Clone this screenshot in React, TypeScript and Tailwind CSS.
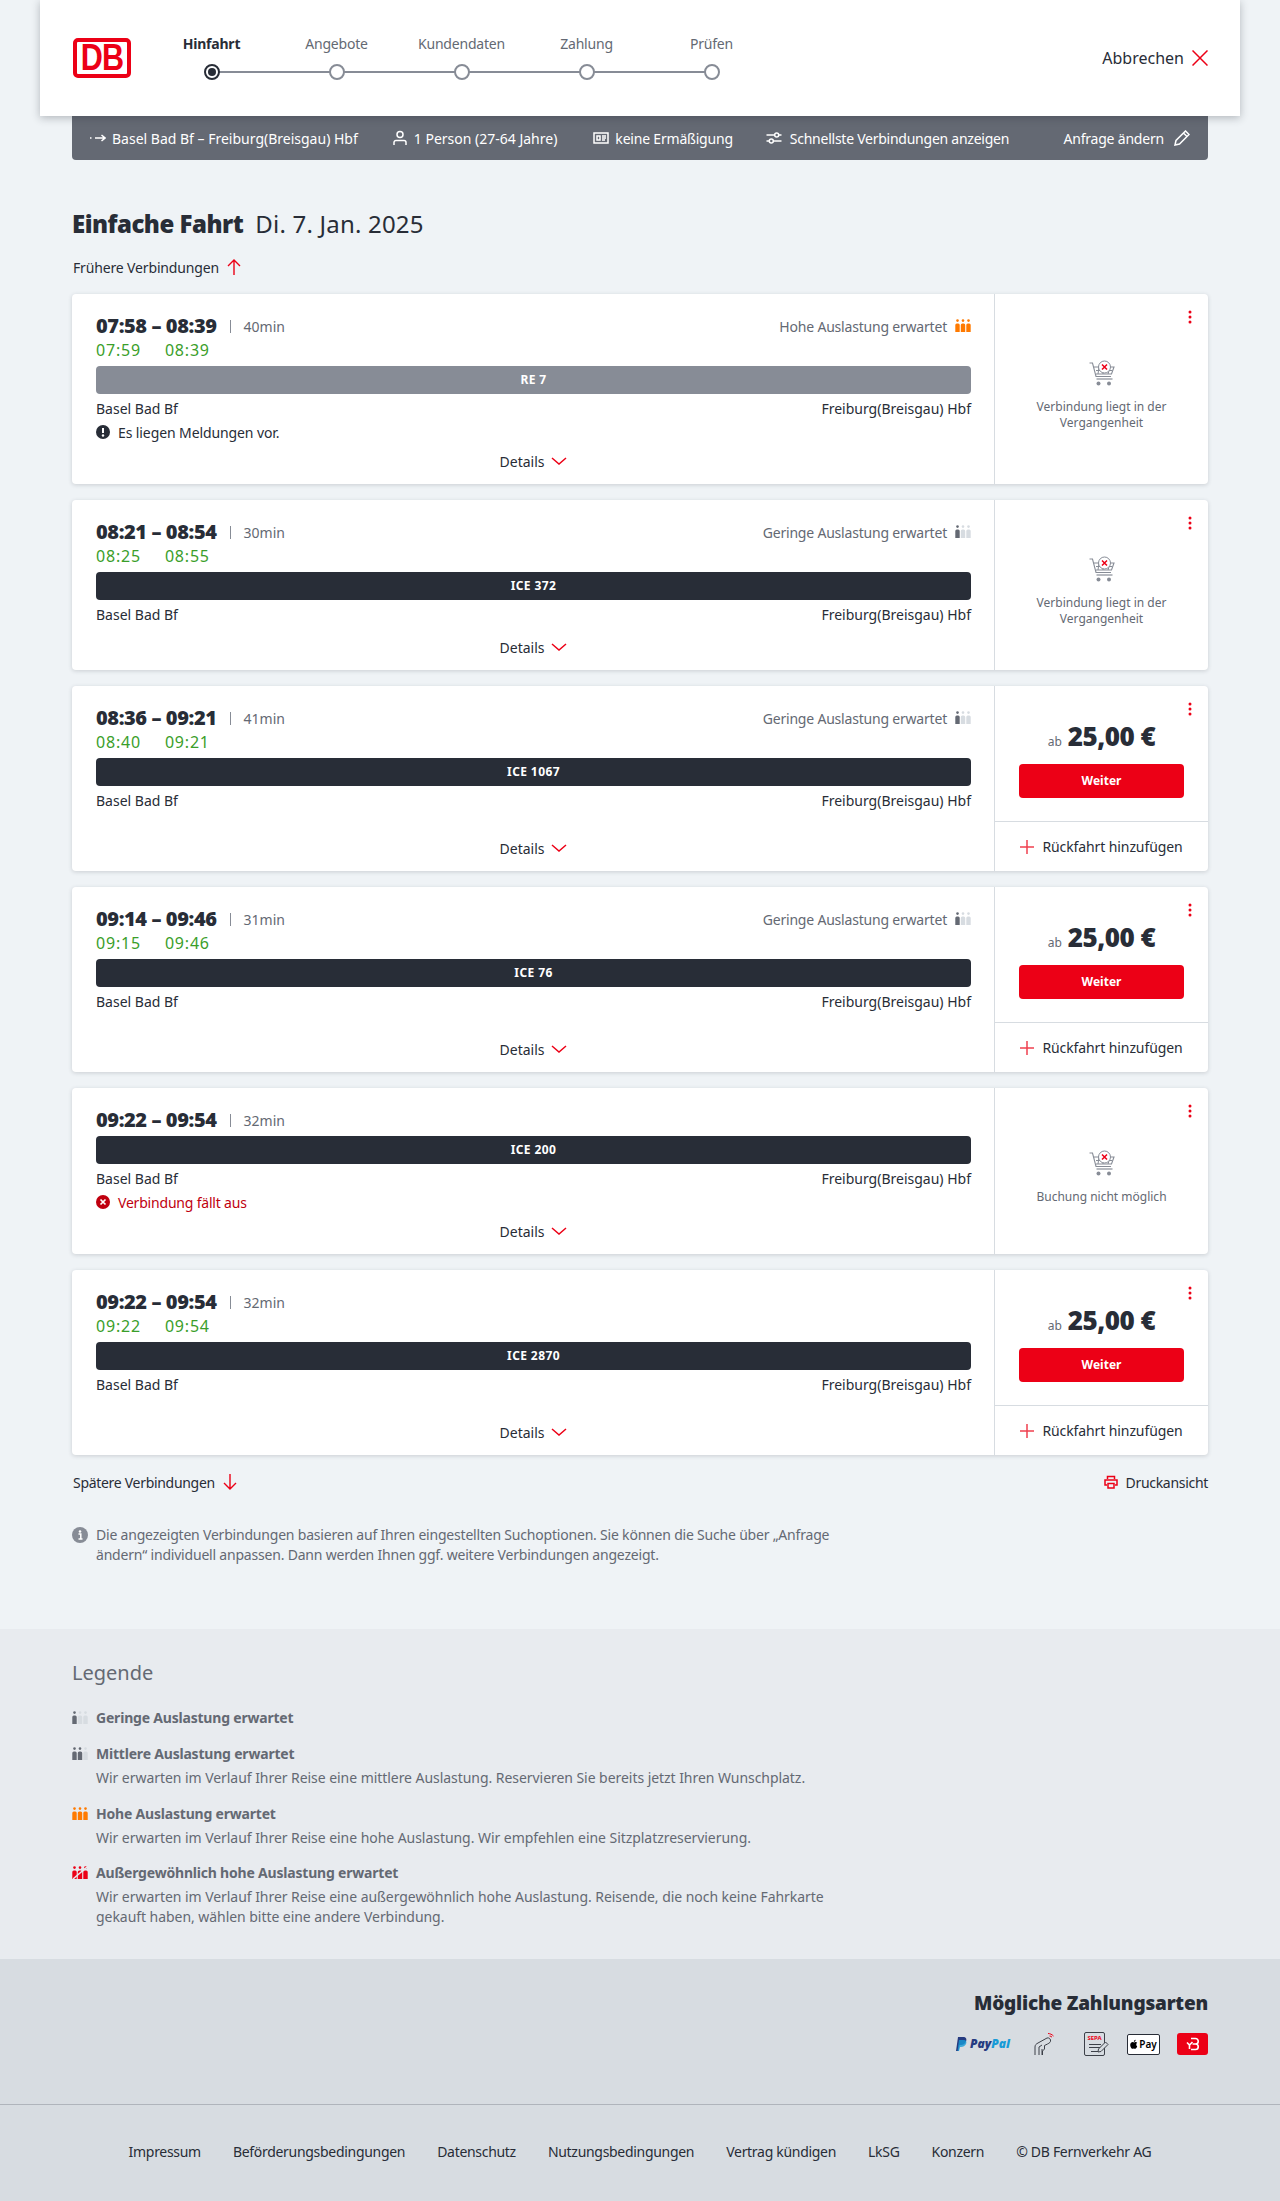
import React from "react";

const RED = "#EC0016";

function Load({ level, className = "" }: { level: 1 | 2 | 3 | 4; className?: string }) {
  const on = level === 3 ? "#FF7A00" : level === 4 ? "#EC0016" : "#646973";
  const off = "#D7DCE1";
  const c = (i: number) => (i < level ? on : off);
  return (
    <svg width="16" height="14" viewBox="0 0 16 14" className={className}>
      {[0, 1, 2].map((i) => (
        <g key={i} fill={c(i)}>
          <circle cx={2.5 + i * 5.5} cy="1.6" r="1.3" />
          <path d={`M${0.3 + i * 5.5} 6a1.5 1.5 0 0 1 1.5-1.5h1.4a1.5 1.5 0 0 1 1.5 1.5v7h-4.4z`} />
        </g>
      ))}
      {level === 4 && <path d="M1 13L15 1" stroke="#E8EBEF" strokeWidth="1.6" />}
    </svg>
  );
}

function Kebab() {
  return (
    <svg width="4" height="14" viewBox="0 0 4 14" className="absolute top-4 right-[16px]">
      <circle cx="2" cy="2" r="1.5" fill={RED} />
      <circle cx="2" cy="7" r="1.5" fill={RED} />
      <circle cx="2" cy="12" r="1.5" fill={RED} />
    </svg>
  );
}

function Cart() {
  return (
    <svg width="26" height="26" viewBox="0 0 26 26" fill="none">
      <path d="M0.5 3h3l3.5 13.5h15M5 7h5M14 7h11l-2.5 7H7" stroke="#878C96" strokeWidth="1.1" />
      <path d="M7 10.5h16M9 14l1-7M14 14v-3M19 14l1-3" stroke="#878C96" strokeWidth="1" />
      <path d="M7.5 19h16" stroke="#878C96" strokeWidth="1.2" />
      <circle cx="9.5" cy="23.5" r="2" fill="#878C96" />
      <circle cx="20" cy="23.5" r="2" fill="#878C96" />
      <circle cx="15.5" cy="7" r="6" fill="#fff" stroke="#878C96" strokeWidth="1" />
      <path d="M13 4.5l5 5M18 4.5l-5 5" stroke={RED} strokeWidth="1.5" />
    </svg>
  );
}

function Chevron() {
  return (
    <svg width="16" height="8" viewBox="0 0 16 8" fill="none" className="ml-[7px]">
      <path d="M1 1l7 6 7-6" stroke={RED} strokeWidth="1.5" />
    </svg>
  );
}

function Plus() {
  return (
    <svg width="14" height="14" viewBox="0 0 14 14" className="mr-2 shrink-0">
      <path d="M7 0v14M0 7h14" stroke="#F0404F" strokeWidth="1.5" />
    </svg>
  );
}

type C = {
  time: string;
  dur: string;
  rt?: [string, string];
  load?: [string, 1 | 3];
  train: string;
  grey?: boolean;
  msg?: "info" | "fail";
  side: "past" | "none" | "price";
};

const cards: C[] = [
  { time: "07:58 – 08:39", dur: "40min", rt: ["07:59", "08:39"], load: ["Hohe Auslastung erwartet", 3], train: "RE 7", grey: true, msg: "info", side: "past" },
  { time: "08:21 – 08:54", dur: "30min", rt: ["08:25", "08:55"], load: ["Geringe Auslastung erwartet", 1], train: "ICE 372", side: "past" },
  { time: "08:36 – 09:21", dur: "41min", rt: ["08:40", "09:21"], load: ["Geringe Auslastung erwartet", 1], train: "ICE 1067", side: "price" },
  { time: "09:14 – 09:46", dur: "31min", rt: ["09:15", "09:46"], load: ["Geringe Auslastung erwartet", 1], train: "ICE 76", side: "price" },
  { time: "09:22 – 09:54", dur: "32min", train: "ICE 200", msg: "fail", side: "none" },
  { time: "09:22 – 09:54", dur: "32min", rt: ["09:22", "09:54"], train: "ICE 2870", side: "price" },
];

function Card({ c }: { c: C }) {
  return (
    <div className="relative flex rounded-[4px] bg-white shadow-[0_1px_4px_rgba(40,45,55,0.18)]">
      <div className="flex min-w-0 flex-1 flex-col border-r border-[#D7DCE1] pr-[23px] pl-6 pt-5">
        <div className="flex h-6 items-center justify-between">
          <div className="flex items-center">
            <span className="text-[20px] font-black tracking-[-0.4px] text-[#282D37]">{c.time}</span>
            <span className="ml-[13px] h-[13px] w-px bg-[#878C96]" />
            <span className="ml-[13px] text-[14px] text-[#646973]">{c.dur}</span>
          </div>
          {c.load && (
            <div className="flex items-center text-[14px] tracking-[-0.2px] text-[#646973]">
              {c.load[0]}
              <Load level={c.load[1]} className="ml-2" />
            </div>
          )}
        </div>
        {c.rt && (
          <div className="flex h-6 items-center gap-[24px] text-[16px] tracking-[0.8px] text-[#3A9E2A]">
            <span>{c.rt[0]}</span>
            <span>{c.rt[1]}</span>
          </div>
        )}
        <div className={`mt-1 flex h-7 items-center justify-center rounded-[4px] text-[12px] font-bold tracking-[0.4px] text-white ${c.grey ? "bg-[#878C96]" : "bg-[#282D37]"}`}>
          {c.train}
        </div>
        <div className="mt-1 flex h-5 items-center justify-between text-[14px] text-[#282D37]">
          <span>Basel Bad Bf</span>
          <span>Freiburg(Breisgau) Hbf</span>
        </div>
        {c.msg === "info" && (
          <div className="mt-1 -mb-1 flex h-5 items-center text-[14px] tracking-[-0.1px] text-[#282D37]">
            <svg width="14" height="14" viewBox="0 0 14 14" className="mr-2">
              <circle cx="7" cy="7" r="7" fill="#282D37" />
              <path d="M7 3v5" stroke="#fff" strokeWidth="2" />
              <circle cx="7" cy="10.5" r="1.2" fill="#fff" />
            </svg>
            Es liegen Meldungen vor.
          </div>
        )}
        {c.msg === "fail" && (
          <div className="mt-1 -mb-1 flex h-5 items-center text-[14px] tracking-[-0.2px] text-[#C0000F]">
            <svg width="14" height="14" viewBox="0 0 14 14" className="mr-2">
              <circle cx="7" cy="7" r="7" fill="#C0000F" />
              <path d="M4.5 4.5l5 5M9.5 4.5l-5 5" stroke="#fff" strokeWidth="1.7" />
            </svg>
            Verbindung fällt aus
          </div>
        )}
        <div className="mt-auto flex h-[46px] items-start justify-center pt-[13px]">
          <div className="flex h-5 items-center text-[14px] text-[#282D37]">
            Details
            <Chevron />
          </div>
        </div>
      </div>
      <div className="relative flex w-[213px] shrink-0 flex-col">
        <Kebab />
        {c.side === "price" ? (
          <>
            <div className="flex h-[136px] flex-col items-center border-b border-[#D7DCE1] pt-8">
              <div className="flex h-9 items-baseline">
                <span className="mr-[6px] text-[12px] text-[#646973]">ab</span>
                <span className="text-[26px] leading-9 font-black tracking-[-0.5px] text-[#282D37]">25,00 €</span>
              </div>
              <div className="mt-[10px] flex h-[34px] w-[165px] items-center justify-center rounded-[4px] bg-[#EC0016] text-[12px] font-bold text-white">
                Weiter
              </div>
            </div>
            <div className="flex h-[49px] items-center justify-center text-[14px] tracking-[-0.1px] text-[#282D37]">
              <Plus />
              Rückfahrt hinzufügen
            </div>
          </>
        ) : (
          <div className="flex flex-1 flex-col items-center justify-center px-6 pt-[12px] text-center">
            <Cart />
            <div className="mt-[13px] text-[12px] leading-4 text-[#646973]">
              {c.side === "past" ? (
                <>
                  Verbindung liegt in der
                  <br />
                  Vergangenheit
                </>
              ) : (
                "Buchung nicht möglich"
              )}
            </div>
          </div>
        )}
      </div>
    </div>
  );
}

function ArrowV({ up }: { up?: boolean }) {
  return (
    <svg width="14" height="16" viewBox="0 0 14 16" fill="none" className="ml-2" style={up ? undefined : { transform: "rotate(180deg)" }}>
      <path d="M7 16V1M1 7l6-6 6 6" stroke={RED} strokeWidth="1.4" />
    </svg>
  );
}

const steps = ["Hinfahrt", "Angebote", "Kundendaten", "Zahlung", "Prüfen"];

function Stepper() {
  return (
    <div className="-mt-[3px] ml-[18px] flex">
      {steps.map((s, i) => (
        <div key={s} className="relative flex w-[125px] flex-col items-center">
          <div className={`flex h-5 items-center text-[14px] tracking-[-0.2px] ${i === 0 ? "font-bold text-[#282D37]" : "text-[#646973]"}`}>{s}</div>
          {i < 4 && <span className="absolute top-[38px] left-1/2 h-0.5 w-full bg-[#878C96]" />}
          <div className={`relative mt-[11px] flex h-4 w-4 items-center justify-center rounded-full border-2 bg-white ${i === 0 ? "border-[#282D37]" : "border-[#878C96]"}`}>
            {i === 0 && <span className="h-2 w-2 rounded-full bg-[#282D37]" />}
          </div>
        </div>
      ))}
    </div>
  );
}

function BarIcon({ d, extra }: { d: string; extra?: React.ReactNode }) {
  return (
    <svg width="16" height="16" viewBox="0 0 16 16" fill="none" stroke="#fff" strokeWidth="1.5" className="mr-[6px] shrink-0">
      <path d={d} />
      {extra}
    </svg>
  );
}

function Legend({ level, title, text }: { level: 1 | 2 | 3 | 4; title: string; text?: React.ReactNode }) {
  return (
    <div className="flex">
      <div className="flex h-5 w-6 shrink-0 items-center">
        <Load level={level} />
      </div>
      <div className="w-[760px] text-[14px] leading-5 tracking-[-0.05px] text-[#646973]">
        <div className="h-5 font-bold tracking-[-0.2px]">{title}</div>
        {text && <div className="mt-1">{text}</div>}
      </div>
    </div>
  );
}

export default function App() {
  return (
    <div className="min-h-[2201px] bg-[#EFF3F6] font-['Noto_Sans',sans-serif] text-[#282D37]">
      <header className="relative z-10 mx-10 flex h-[116px] items-center bg-white px-8 shadow-[0_2px_8px_rgba(40,45,55,0.3)]">
        <div className="ml-px flex h-10 w-[58px] items-center justify-center overflow-hidden rounded-[5px] border-[4px] border-[#EC0016] bg-white font-['Liberation_Sans',sans-serif] text-[36px] leading-none font-bold tracking-[-1px] text-[#EC0016]">
          <span className="scale-x-[0.85]">DB</span>
        </div>
        <Stepper />
        <div className="ml-auto flex items-center text-[16px] text-[#282D37]">
          Abbrechen
          <svg width="16" height="16" viewBox="0 0 16 16" fill="none" className="ml-2">
            <path d="M0.5 0.5l15 15M15.5 0.5l-15 15" stroke={RED} strokeWidth="1.5" />
          </svg>
        </div>
      </header>

      <main className="mx-[72px]">
        <div className="flex h-11 items-center rounded-b-[4px] bg-[#646973] pr-[18px] pl-[18px] text-[14px] text-white">
          <BarIcon d="M5 8h10M11.500 5l3.500 3-3.500 3M0 8h1.500" />
          <span>Basel Bad Bf – Freiburg(Breisgau) Hbf</span>
          <span className="ml-[34px] flex items-center">
            <BarIcon d="M2 15v-2.500a2 2 0 0 1 2-2h8a2 2 0 0 1 2 2V15" extra={<circle cx="8" cy="4.500" r="3" />} />
            1 Person (27-64 Jahre)
          </span>
          <span className="ml-[36px] flex items-center tracking-[-0.2px]">
            <BarIcon d="M1 3h14v10H1zM4 6h3v4H4zM9 6h4M9 8h4M9 10h3" />
            keine Ermäßigung
          </span>
          <span className="ml-[33px] flex items-center tracking-[-0.25px]">
            <svg width="16" height="16" viewBox="0 0 16 16" fill="none" stroke="#fff" strokeWidth="1.500" className="mr-2 shrink-0">
              <path d="M0.500 5h8M13 5h2.500M0.500 11h2.500M8 11h7.500" />
              <circle cx="10.700" cy="5" r="2" />
              <circle cx="5.300" cy="11" r="2" />
            </svg>
            Schnellste Verbindungen anzeigen
          </span>
          <span className="ml-auto flex items-center tracking-[-0.2px]">
            Anfrage ändern
            <svg width="16" height="16" viewBox="0 0 16 16" fill="none" stroke="#fff" strokeWidth="1.500" className="ml-[10px]">
              <path d="M1 15l1-4.500L11.500 1l3.500 3.500L5.500 14zM9.500 3l3.500 3.500" />
            </svg>
          </span>
        </div>

        <h1 className="mt-[48px] flex h-8 items-center text-[24px] font-normal">
          <span className="font-black tracking-[-0.5px]">Einfache Fahrt</span>
          <span className="ml-3 tracking-[0.2px]">Di. 7. Jan. 2025</span>
        </h1>

        <div className="mt-[17px] flex h-5 items-center pl-px text-[14px] tracking-[-0.15px]">
          Frühere Verbindungen
          <ArrowV up />
        </div>

        <div className="mt-[17px] flex flex-col gap-4">
          {cards.map((c, i) => (
            <Card key={i} c={c} />
          ))}
        </div>

        <div className="mt-[17px] flex h-5 items-center justify-between pl-px text-[14px] tracking-[-0.3px]">
          <span className="flex items-center">
            Spätere Verbindungen
            <ArrowV />
          </span>
          <span className="flex items-center">
            <svg width="14" height="14" viewBox="0 0 14 14" className="mr-2" fill="none" stroke={RED} strokeWidth="1.500">
              <path d="M3.500 4V1.500h7V4M3 10H1V5h12v5h-2M4 8.500h6v4.500H4z" />
            </svg>
            Druckansicht
          </span>
        </div>

        <div className="mt-[33px] flex w-[780px] text-[14px] leading-5 tracking-[-0.2px] text-[#646973]">
          <svg width="16" height="16" viewBox="0 0 16 16" className="mt-[2px] mr-2 shrink-0">
            <circle cx="8" cy="8" r="8" fill="#878C96" />
            <circle cx="8" cy="4.500" r="1.300" fill="#fff" />
            <path d="M6.500 7h2.300v4.500M6.500 12h4" stroke="#fff" strokeWidth="1.500" fill="none" />
          </svg>
          <p>
            Die angezeigten Verbindungen basieren auf Ihren eingestellten Suchoptionen. Sie können die Suche über „Anfrage
            <br />
            ändern“ individuell anpassen. Dann werden Ihnen ggf. weitere Verbindungen angezeigt.
          </p>
        </div>
      </main>

      <section className="mt-[64px] h-[330px] bg-[#E8EBEF] px-[72px] pt-[28px]">
        <h2 className="flex h-8 items-center text-[20px] font-normal text-[#646973]">Legende</h2>
        <div className="mt-[19px] flex flex-col">
          <Legend level={1} title="Geringe Auslastung erwartet" />
          <div className="mt-4">
            <Legend level={2} title="Mittlere Auslastung erwartet" text="Wir erwarten im Verlauf Ihrer Reise eine mittlere Auslastung. Reservieren Sie bereits jetzt Ihren Wunschplatz." />
          </div>
          <div className="mt-4">
            <Legend level={3} title="Hohe Auslastung erwartet" text="Wir erwarten im Verlauf Ihrer Reise eine hohe Auslastung. Wir empfehlen eine Sitzplatzreservierung." />
          </div>
          <div className="mt-[15px]">
            <Legend
              level={4}
              title="Außergewöhnlich hohe Auslastung erwartet"
              text={
                <>
                  Wir erwarten im Verlauf Ihrer Reise eine außergewöhnlich hohe Auslastung. Reisende, die noch keine Fahrkarte
                  <br />
                  gekauft haben, wählen bitte eine andere Verbindung.
                </>
              }
            />
          </div>
        </div>
      </section>

      <section className="flex h-[145px] flex-col items-end bg-[#D7DCE1] px-[72px] pt-[29px]">
        <div className="h-[30px] text-[19px] leading-[30px] font-black tracking-[-0.2px]">Mögliche Zahlungsarten</div>
        <div className="mt-[14px] flex h-6 items-center">
          <span className="flex items-center text-[12px] font-black text-[#253B80] italic">
            <svg width="11" height="14" viewBox="0 0 11 14" className="mr-[3px]">
              <path d="M2 0h5c3 0 4 2 3 4.500C9 7 7 8 5 8H3.500L2.500 14H0z" fill="#253B80" />
              <path d="M3 3h5c2 0 3 2 2 4-1 2-3 3-5 3H4l-1 4H1.500z" fill="#179BD7" opacity="0.8" />
            </svg>
            Pay<span className="text-[#179BD7]">Pal</span>
          </span>
          <svg width="24" height="24" viewBox="0 0 24 24" fill="none" stroke="#3C4048" strokeWidth="1" className="ml-[23px]">
            <path d="M2 23v-8c0-2 1-3 3-4l9-5c2-.5 3 .5 3.500 2 .5 2-1 3-3 4l-3 1.500V17l-2 2v4M6 23v-8l3-2M9 23v-6" />
            <path d="M15 1.500c2 0 4 1 5.500 2.500M16.500 4c1 0 2 .5 2.500 1.200" stroke={RED} />
          </svg>
          <div className="relative ml-[27px] h-[24px] w-[25px]">
            <div className="absolute top-0 left-0 flex h-6 w-[21px] flex-col items-center rounded-[2px] border border-[#3C4048] pt-[2px]">
              <span className="text-[6px] leading-[7px] font-bold text-[#EC0016]">SEPA</span>
              <span className="mt-[2px] h-px w-3 bg-[#3C4048]" />
              <span className="mt-[2px] h-px w-3 bg-[#3C4048]" />
              <span className="mt-[3px] h-px w-2 bg-[#3C4048]" />
            </div>
            <svg width="12" height="12" viewBox="0 0 12 12" className="absolute right-0 bottom-[3px]" fill="#D7DCE1" stroke="#3C4048">
              <path d="M1 11l.5-3L8.500 1 11 3.500 4 10.500z" />
            </svg>
          </div>
          <div className="ml-[18px] flex h-[21px] w-[33px] items-center justify-center rounded-[2px] border border-[#282D37] bg-white text-[10px] font-semibold text-black">
            <svg width="8" height="10" viewBox="0 0 8 10" className="mr-[1px]" fill="#000">
              <path d="M6.300 5.300c0-1 .8-1.400.9-1.500-.5-.7-1.200-.8-1.500-.8-.6-.1-1.200.4-1.500.4-.4 0-.9-.4-1.400-.4C1.500 3 .2 4 .2 6c0 1.600 1.200 3.800 2.200 3.800.5 0 .8-.4 1.400-.4s.8.400 1.400.4c1 0 1.800-1.600 2-2.500-1-.4-.9-1.600-.9-2zM5.200 2.200c.3-.4.500-.9.400-1.400-.5 0-1 .3-1.300.7-.3.3-.5.800-.4 1.300.5 0 1-.3 1.300-.6z" />
            </svg>
            Pay
          </div>
          <div className="ml-[17px] flex h-[22px] w-[31px] items-center justify-center rounded-[3px] bg-[#EC0016]">
            <svg width="14" height="14" viewBox="0 0 14 14" fill="none" stroke="#fff" strokeWidth="1.600">
              <path d="M5 1.500h4.500a2.500 2.500 0 0 1 0 5.500H6.500h3a2.700 2.700 0 0 1 0 5.500H5" />
              <path d="M6.500 5L3.500 8 1 5.500M3.500 8v4" />
            </svg>
          </div>
        </div>
      </section>

      <footer className="flex h-[97px] items-center justify-center gap-8 border-t border-[#AFB4BB] bg-[#D7DCE1] pb-1 text-[14px] tracking-[-0.3px]">
        <span>Impressum</span>
        <span>Beförderungsbedingungen</span>
        <span>Datenschutz</span>
        <span>Nutzungsbedingungen</span>
        <span>Vertrag kündigen</span>
        <span>LkSG</span>
        <span>Konzern</span>
        <span>© DB Fernverkehr AG</span>
      </footer>
    </div>
  );
}
